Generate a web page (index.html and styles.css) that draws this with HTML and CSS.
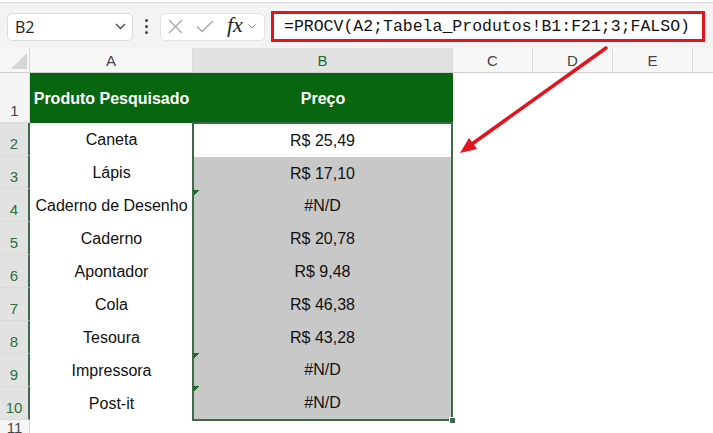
FILE: index.html
```html
<!DOCTYPE html>
<html lang="pt-BR">
  <head>
    <meta charset="UTF-8" />
    <meta name="viewport" content="width=device-width, initial-scale=1.0" />
    <title>PROCV - Produtos</title>
    <link rel="stylesheet" href="styles.css">
  </head>
  <body>
    <div class="ribbon-edge"></div>
    <div class="formula-bar">
      <div class="name-box">
        <span>B2</span>
        <svg width="11" height="7" viewBox="0 0 11 7"><path d="M1 1 L5.5 5.5 L10 1" fill="none" stroke="#444" stroke-width="1.3"/></svg>
      </div>
      <div class="dots"><i></i><i></i><i></i></div>
      <div class="fx-box">
        <svg width="15" height="15" viewBox="0 0 15 15"><path d="M1 1 L14 14 M14 1 L1 14" stroke="#a8a8a8" stroke-width="1.3"/></svg>
        <svg width="18" height="13" viewBox="0 0 18 13"><path d="M1 6.5 L6 11.5 L17 1" fill="none" stroke="#a8a8a8" stroke-width="1.3"/></svg>
        <span class="fx">fx</span>
        <svg width="8" height="5" viewBox="0 0 8 5"><path d="M0.5 0.5 L4 4 L7.5 0.5" fill="none" stroke="#888" stroke-width="1"/></svg>
      </div>
      <div class="formula">=PROCV(A2;Tabela_Produtos!B1:F21;3;FALSO)</div>
    </div>

    <div class="sheet">
      <!-- cabeçalhos de coluna -->
      <div class="corner"><span class="corner-tri"></span></div>
      <div class="col-hdr">A</div>
      <div class="col-hdr selected">B</div>
      <div class="col-hdr">C</div>
      <div class="col-hdr">D</div>
      <div class="col-hdr">E</div>
      <div class="col-hdr last"></div>

      <!-- linha 1 -->
      <div class="row-hdr">1</div>
      <div class="title">Produto Pesquisado</div>
      <div class="title">Preço</div>

      <!-- linhas 2 a 10 -->
      <div class="row-hdr active">2</div>
      <div class="cell">Caneta</div>
      <div class="selection">
        <div class="cell current">R$ 25,49</div>
        <div class="cell">R$ 17,10</div>
        <div class="cell flag">#N/D</div>
        <div class="cell">R$ 20,78</div>
        <div class="cell">R$ 9,48</div>
        <div class="cell">R$ 46,38</div>
        <div class="cell">R$ 43,28</div>
        <div class="cell flag">#N/D</div>
        <div class="cell flag">#N/D</div>
        <span class="fill-handle"></span>
      </div>
      <div class="row-hdr active">3</div>
      <div class="cell">Lápis</div>
      <div class="row-hdr active">4</div>
      <div class="cell">Caderno de Desenho</div>
      <div class="row-hdr active">5</div>
      <div class="cell">Caderno</div>
      <div class="row-hdr active">6</div>
      <div class="cell">Apontador</div>
      <div class="row-hdr active">7</div>
      <div class="cell">Cola</div>
      <div class="row-hdr active">8</div>
      <div class="cell">Tesoura</div>
      <div class="row-hdr active">9</div>
      <div class="cell">Impressora</div>
      <div class="row-hdr active">10</div>
      <div class="cell">Post-it</div>
      <div class="row-hdr last-row">11</div>
    </div>

    <svg class="arrow" width="713" height="433" viewBox="0 0 713 433">
      <path d="M606 48 L472 144" stroke="#e3141c" stroke-width="3.5" stroke-linecap="round"/>
      <path d="M460 153 L477 149 L469 138 Z" fill="#e3141c"/>
    </svg>
  </body>
</html>
```

FILE: styles.css
```css
body {
  margin: 0;
  width: 713px;
  height: 433px;
  overflow: hidden;
  background: #fff;
  font-family: "Liberation Sans", Arial, sans-serif;
  color: #111;
}
.ribbon-edge {
  height: 2px;
  background: #fff;
  border-bottom: 1px solid #dadada;
}
.formula-bar {
  height: 45px;
  box-sizing: border-box;
  padding: 2px 0 0 7px;
  background: #f3f3f3;
  display: flex;
  align-items: center;
}
.name-box {
  width: 126px;
  height: 28px;
  box-sizing: border-box;
  background: #fff;
  border: 1px solid #dcdcdc;
  border-radius: 5px;
  display: flex;
  align-items: center;
  justify-content: space-between;
  padding: 0 6px 0 7px;
  font-family: "Open Sans", sans-serif;
  font-size: 16px;
  color: #222;
}
.dots {
  width: 27px;
  display: flex;
  flex-direction: column;
  align-items: center;
  gap: 3px;
}
.dots i {
  width: 3px;
  height: 3px;
  border-radius: 50%;
  background: #444;
}
.fx-box {
  width: 105px;
  height: 28px;
  box-sizing: border-box;
  background: #fff;
  border: 1px solid #e2e2e2;
  border-radius: 5px;
  display: flex;
  align-items: center;
  padding: 0 5px 0 7px;
  gap: 13px;
}
.fx {
  font-family: "Liberation Serif", serif;
  font-style: italic;
  font-size: 22px;
  color: #222;
  margin-right: -8px;
  margin-top: -3px;
}
.formula {
  margin-left: 6px;
  width: 434px;
  height: 31px;
  box-sizing: border-box;
  border: 3px solid #e3141c;
  background: #fff;
  font-family: "Liberation Mono", monospace;
  font-size: 16.5px;
  line-height: 25px;
  padding-left: 10px;
  color: #111;
  white-space: nowrap;
}
.sheet {
  display: grid;
  grid-template-columns: 30px 163px 260px 80px 80px 80px 1fr;
  grid-template-rows: 25px 50px repeat(9, 33px) 1fr;
  height: 385px;
}
.corner {
  background: #f7f7f7;
  border-right: 1px solid #d9d9d9;
  border-bottom: 1px solid #cfcfcf;
  display: flex;
  justify-content: flex-end;
  align-items: flex-end;
  padding: 0 2px 3px 0;
}
.corner-tri {
  width: 0;
  height: 0;
  border-left: 16px solid transparent;
  border-bottom: 16px solid #d6d6d6;
}
.col-hdr {
  background: #f7f7f7;
  border-right: 1px solid #dadada;
  border-bottom: 1px solid #cfcfcf;
  display: flex;
  align-items: center;
  justify-content: center;
  font-size: 15px;
  color: #444;
}
.col-hdr.selected {
  background: #e1e1e1;
  color: #1d6b33;
}
.col-hdr.last {
  border-right: 0;
}
.row-hdr {
  grid-column: 1;
  background: #f5f5f5;
  border-right: 1px solid #d9d9d9;
  border-bottom: 1px solid #dadada;
  display: flex;
  align-items: flex-end;
  justify-content: center;
  padding-bottom: 3px;
  font-size: 15px;
  color: #444;
}
.row-hdr.active {
  background: #e2e2e2;
  color: #2a7040;
  border-right: 2px solid #3e6a49;
}
.row-hdr.last-row {
  align-items: flex-start;
  padding: 0;
  line-height: 15px;
}
.title {
  background: #086510;
  color: #fff;
  font-weight: bold;
  font-size: 16px;
  display: flex;
  align-items: center;
  justify-content: center;
  padding-top: 2px;
}
.cell {
  display: flex;
  align-items: center;
  justify-content: center;
  font-size: 16px;
  color: #111;
  padding-top: 1px;
}
.selection {
  grid-row: span 9;
  position: relative;
  border: 2px solid #3e6a49;
  margin: -1px 0 -1px -1px;
  display: flex;
  flex-direction: column;
  background: #c8c8c8;
}
.selection .cell {
  flex: 1;
}
.selection .current {
  background: #fff;
}
.selection .flag {
  background: linear-gradient(135deg, #1e6a26 0 4px, transparent 4px) no-repeat top left / 7px 7px;
}
.fill-handle {
  position: absolute;
  right: -5px;
  bottom: -5px;
  width: 5px;
  height: 5px;
  background: #3e6a49;
  border: 1px solid #fff;
}
.arrow {
  position: absolute;
  left: 0;
  top: 0;
  pointer-events: none;
}
```
